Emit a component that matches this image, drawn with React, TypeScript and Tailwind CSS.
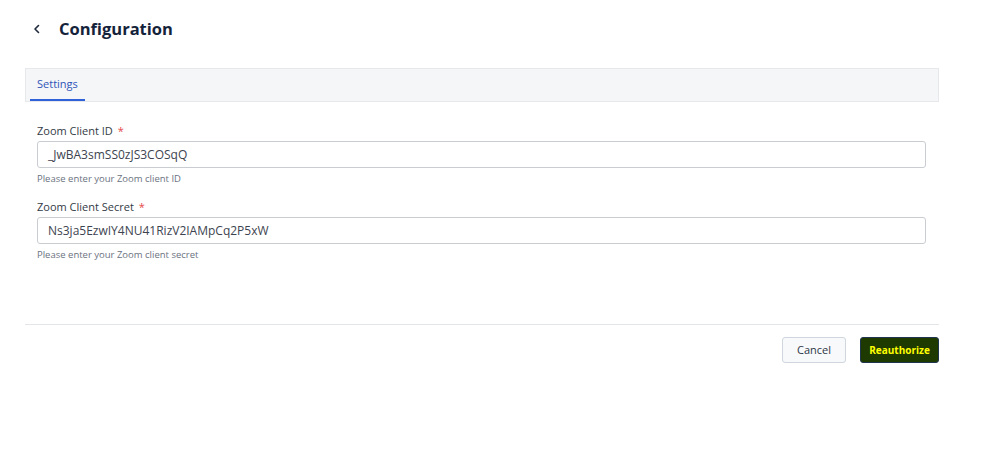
import React from 'react';

const fieldFont = { fontFamily: '"Open Sans", "Noto Sans", sans-serif' };

type FieldProps = {
  label: string;
  value: string;
  hint: string;
};

const Field: React.FC<FieldProps> = ({ label, value, hint }) => (
  <div>
    <label className="block text-[11px] leading-[14px] text-[#333b45]">
      {label} <span className="ml-0.5 text-[#e5484d]">*</span>
    </label>
    <div className="mt-[3px] flex h-[27px] items-center rounded-[3px] border border-[#c9cdd2] bg-white px-[10px] text-[12px] text-[#3d4450]">
      {value}
    </div>
    <p className="mt-[5px] text-[9.5px] leading-[12px] text-[#6b7280]">{hint}</p>
  </div>
);

export default function App() {
  return (
    <div className="min-h-screen w-[988px] bg-white" style={fieldFont}>
      {/* Header */}
      <div className="flex items-center pl-[31px] pt-[16px]">
        <svg className="h-[12px] w-[12px] text-[#1f2a3c]" viewBox="0 0 12 12" fill="none">
          <path d="M7.5 2.5 4 6l3.5 3.5" stroke="currentColor" strokeWidth={1.6} strokeLinecap="round" strokeLinejoin="round" />
        </svg>
        <h1 className="ml-[16px] text-[16.5px] font-bold leading-[26px] text-[#14233a]">Configuration</h1>
      </div>

      <div className="ml-[25px] mt-[26px] w-[914px]">
        {/* Tabs */}
        <div className="flex h-[34px] items-end border border-[#e6e8eb] bg-[#f5f6f8] px-[4px]">
          <div className="border-b-2 border-[#2f62d9] px-[7px] pb-[7px] text-[11px] leading-[16px] text-[#2f55b8]">
            Settings
          </div>
        </div>

        {/* Form */}
        <div className="flex flex-col gap-[15px] px-[12px] pt-[22px] pr-[13px]">
          <Field label="Zoom Client ID" value="_JwBA3smSS0zJS3COSqQ" hint="Please enter your Zoom client ID" />
          <Field label="Zoom Client Secret" value="Ns3ja5EzwIY4NU41RizV2IAMpCq2P5xW" hint="Please enter your Zoom client secret" />
        </div>

        {/* Footer */}
        <div className="mt-[63px] border-t border-[#e3e5e8] pt-[12px]">
          <div className="flex justify-end gap-[14px]">
            <button className="h-[26px] w-[64px] rounded-[3px] border border-[#cfd6de] bg-[#f7f9fb] text-[11px] text-[#2d3744]">
              Cancel
            </button>
            <button className="h-[26px] w-[79px] rounded-[3px] border border-[#1e3550] bg-[#1f3a00] text-[10px] font-bold text-[#ffff00]">
              Reauthorize
            </button>
          </div>
        </div>
      </div>
    </div>
  );
}
